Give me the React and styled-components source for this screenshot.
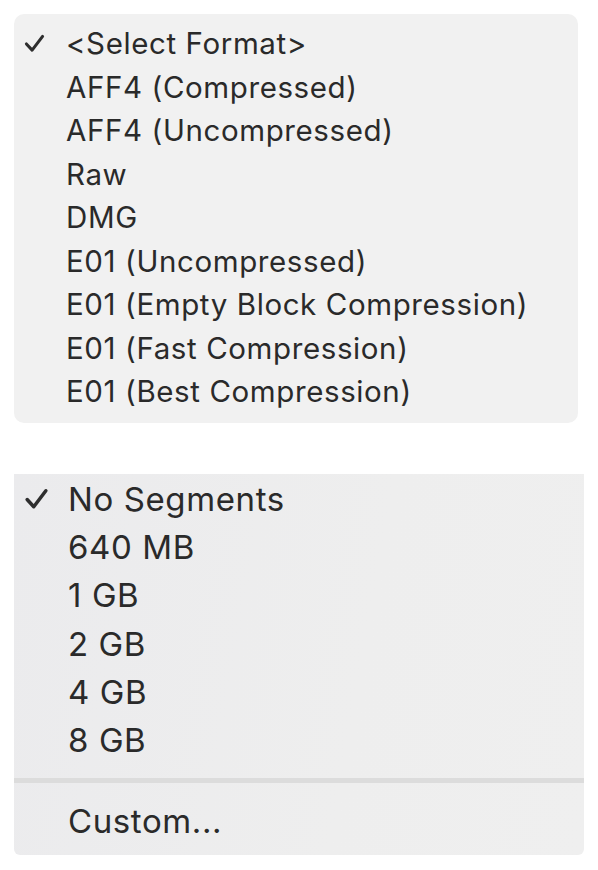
import React from "react";
import styled, { createGlobalStyle } from "styled-components";

const Global = createGlobalStyle`
  html, body { margin: 0; padding: 0; background: #ffffff; }
  body { font-family: Inter, "Liberation Sans", Arial, sans-serif; -webkit-font-smoothing: antialiased; }
`;

const Page = styled.div`
  display: flex;
  flex-direction: column;
  padding: 14px 0 0 14px;
  gap: 51px;
`;

const FormatMenu = styled.div`
  width: 564px;
  background: #f1f1f1;
  border-radius: 10px;
  padding: 7.5px 0 9.5px;
  box-sizing: border-box;
  height: 409px;
`;

const SegmentMenu = styled.div`
  width: 570px;
  background: linear-gradient(100deg, #ebebed 0%, #eeeeee 60%, #efefef 100%);
  border-radius: 0 0 6px 6px;
  padding: 1px 0 8px;
  box-sizing: border-box;
  height: 381px;
  display: flex;
  flex-direction: column;
`;

const Item = styled.div`
  display: flex;
  align-items: center;
  height: ${(p) => p.$h}px;
  font-size: ${(p) => p.$fs}px;
  color: #2a2a2a;
  white-space: nowrap;
  letter-spacing: ${(p) => p.$ls || 0}px;
`;

const CheckSlot = styled.span`
  width: ${(p) => p.$w}px;
  flex: none;
  display: flex;
  align-items: center;
  justify-content: flex-start;
  padding-left: ${(p) => p.$pl}px;
  box-sizing: border-box;
`;

const Separator = styled.div`
  height: 5px;
  background: #dcdcdc;
  margin: 14px 0 14px;
  flex: none;
`;

const Check = ({ w, h }) => (
  <svg width={w} height={h} viewBox="0 0 22 20" fill="none">
    <path
      d="M2.5 10.5 L8.5 17 L19.5 2.5"
      stroke="#2e2e2e"
      strokeWidth="3.2"
      strokeLinecap="round"
      strokeLinejoin="round"
    />
  </svg>
);

const formats = [
  "<Select Format>",
  "AFF4 (Compressed)",
  "AFF4 (Uncompressed)",
  "Raw",
  "DMG",
  "E01 (Uncompressed)",
  "E01 (Empty Block Compression)",
  "E01 (Fast Compression)",
  "E01 (Best Compression)",
];

const segments = ["No Segments", "640 MB", "1 GB", "2 GB", "4 GB", "8 GB"];

export default function App() {
  return (
    <>
      <Global />
      <Page>
        <FormatMenu>
          {formats.map((f, i) => (
            <Item key={f} $h={43.5} $fs={29.5} $ls={0.6}>
              <CheckSlot $w={52} $pl={10}>
                {i === 0 && <Check w={21} h={19} />}
              </CheckSlot>
              {f}
            </Item>
          ))}
        </FormatMenu>
        <SegmentMenu>
          {segments.map((s, i) => (
            <Item key={s} $h={48.2} $fs={33} $ls={0.6}>
              <CheckSlot $w={54} $pl={10}>
                {i === 0 && <Check w={25} h={22} />}
              </CheckSlot>
              {s}
            </Item>
          ))}
          <Separator />
          <Item $h={48} $fs={33} $ls={0.6}>
            <CheckSlot $w={54} $pl={10} />
            Custom...
          </Item>
        </SegmentMenu>
      </Page>
    </>
  );
}
